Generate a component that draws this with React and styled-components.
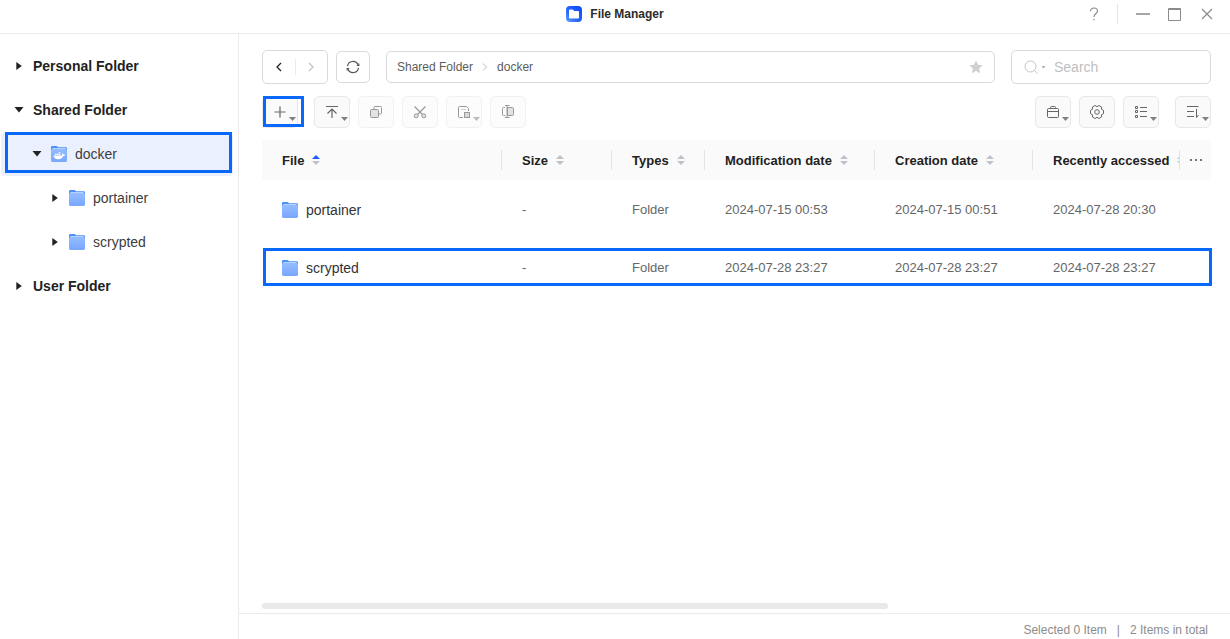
import { useState } from "react";
import styled, { createGlobalStyle, css } from "styled-components";

const GlobalStyle = createGlobalStyle`
  * {
    box-sizing: border-box;
  }

  body {
    margin: 0;
    background: #ffffff;
    color: #2b2b2b;
    font-family: "Liberation Sans", Arial, sans-serif;
    font-size: 14px;
  }

  button,
  input {
    font-family: inherit;
    font-size: inherit;
    color: inherit;
  }
`;

const Window = styled.div`
  display: flex;
  flex-direction: column;
  height: 100vh;
  overflow: hidden;
`;

const TitleBar = styled.header`
  display: grid;
  grid-template-columns: 1fr auto 1fr;
  align-items: center;
  padding: 0 16px 5px;
  height: 34px;
  flex-shrink: 0;
  border-bottom: 1px solid #ebebeb;
`;

const Title = styled.h1`
  display: flex;
  align-items: center;
  gap: 8px;
  grid-column: 2;
  margin: 0;
  font-size: 12px;
  line-height: 16px;
`;

const WindowControls = styled.div`
  display: flex;
  align-items: center;
  justify-content: flex-end;
  gap: 18px;
`;

const IconButton = styled.button`
  display: flex;
  align-items: center;
  justify-content: center;
  padding: 0;
  border: none;
  background: transparent;
  color: ${({ $color }) => $color || "#8a8a8a"};
`;

const Divider = styled.span`
  width: 1px;
  height: 20px;
  background: #e6e6e6;
`;

const Content = styled.div`
  display: flex;
  flex: 1;
  min-height: 0;
`;

const Sidebar = styled.nav`
  width: 239px;
  flex-shrink: 0;
  padding: 10px 5px 0 1px;
  border-right: 1px solid #ebebeb;
`;

const Tree = styled.ul`
  margin: 0;
  padding: 0;
  list-style-type: none;
`;

const TreeArrow = styled.span`
  display: flex;
  justify-content: center;
  width: 16px;
  margin-right: 6px;
`;

// the blue frame drawn round the parts of the page that matter
const highlight = css`
  content: "";
  position: absolute;
  border: 3px solid #0768f9;
  pointer-events: none;
`;

const TreeItem = styled.button`
  position: relative;
  display: flex;
  align-items: center;
  width: 100%;
  height: 44px;
  padding: 0 0 0 ${({ $depth }) => 10 + $depth * 18}px;
  border: none;
  border-radius: 4px;
  background: ${({ $selected }) => ($selected ? "#ebf0ff" : "transparent")};
  font-weight: ${({ $depth }) => ($depth ? "normal" : "bold")};
  color: ${({ $depth }) => ($depth ? "#3d3d3d" : "#222222")};
  text-align: left;

  svg + span {
    margin-left: 8px;
  }

  ${({ $selected }) =>
    $selected &&
    css`
      &::after {
        ${highlight}
        inset: 0 1px 3px 4px;
      }
    `}
`;

const Main = styled.main`
  display: flex;
  flex-direction: column;
  flex: 1;
  min-width: 0;
`;

const Panel = styled.div`
  display: flex;
  flex-direction: column;
  flex: 1;
  padding: 16px 19px 4px 23px;
`;

const LocationBar = styled.div`
  display: flex;
  align-items: center;
  height: 34px;
`;

const History = styled.div`
  display: flex;
  align-items: center;
  width: 66px;
  height: 34px;
  margin-right: 8px;
  border: 1px solid #d9d9d9;
  border-radius: 5px;

  button {
    flex: 1;
    height: 32px;
  }
`;

const HistoryDivider = styled.span`
  width: 1px;
  height: 16px;
  background: #ebebeb;
`;

const Refresh = styled(IconButton)`
  width: 34px;
  height: 32px;
  margin-right: 16px;
  border: 1px solid #d9d9d9;
  border-radius: 5px;
`;

const Path = styled.div`
  display: flex;
  align-items: center;
  flex: 1;
  gap: 9px;
  height: 32px;
  margin-right: 16px;
  padding: 0 11px 0 10px;
  border: 1px solid #d9d9d9;
  border-radius: 5px;
  font-size: 12px;

  button {
    margin-left: auto;
  }
`;

const PathLink = styled.a`
  color: #5c5c5c;
  text-decoration: none;
`;

const SearchBox = styled.label`
  display: flex;
  align-items: center;
  width: 200px;
  height: 34px;
  padding: 0 12px;
  border: 1px solid #d9d9d9;
  border-radius: 5px;
`;

const SearchInput = styled.input`
  flex: 1;
  min-width: 0;
  margin-left: 8px;
  padding: 0;
  border: none;
  outline: none;
  background: transparent;

  &::placeholder {
    color: #bfbfbf;
    opacity: 1;
  }
`;

const SearchCaret = styled.svg`
  margin-left: 3px;
`;

const Toolbar = styled.div`
  display: flex;
  align-items: center;
  gap: 8px;
  margin: 12px 0;
`;

const Spacer = styled.span`
  flex: ${({ $grow }) => ($grow ? 1 : "none")};
`;

const ToolButton = styled.button`
  position: relative;
  display: flex;
  align-items: center;
  justify-content: center;
  width: 36px;
  height: 32px;
  padding: 0;
  border: 1px solid #e8e8e8;
  border-radius: 5px;
  background: #fafafa;
  color: #666666;

  &:disabled {
    border-color: #f1f1f1;
    background: #fcfcfc;
    color: #999999;
  }

  ${({ $marked }) =>
    $marked &&
    css`
      &::after {
        ${highlight}
        inset: -1px -7px 0 0;
      }
    `}
`;

const Caret = styled.svg`
  position: absolute;
  right: 1px;
  bottom: 6px;
`;

const FileTable = styled.table`
  width: 100%;
  table-layout: fixed;
  border-collapse: collapse;
  color: #666666;
  font-size: 13px;
`;

const HeadCell = styled.th`
  position: relative;
  height: 40px;
  padding: 0 0 0 20px;
  overflow: hidden;
  background: #fafafa;
  color: #222222;
  text-align: left;
  white-space: nowrap;

  &:not(:last-child)::after {
    content: "";
    position: absolute;
    top: 10px;
    right: 0;
    width: 1px;
    height: 20px;
    background: #e4e4e4;
  }
`;

const MoreCell = styled(HeadCell)`
  padding: 0;

  button {
    margin: 0 auto;
  }
`;

const HeadLabel = styled.span`
  display: flex;
  align-items: center;
  gap: 8px;

  svg {
    flex-shrink: 0;
  }
`;

const FileRow = styled.tr`
  position: relative;
  height: 58px;

  ${({ $marked }) =>
    $marked &&
    css`
      &::after {
        ${highlight}
        inset: 10px -1px 10px 1px;
      }
    `}
`;

const Cell = styled.td`
  padding: 0 0 0 20px;
  white-space: nowrap;
`;

const FileName = styled.span`
  display: flex;
  align-items: center;
  gap: 8px;
  padding-top: 2px;
  color: #333333;
  font-size: 14px;
`;

const ScrollTrack = styled.div`
  height: 6px;
  margin-top: auto;
`;

const ScrollThumb = styled.div`
  width: 66%;
  height: 6px;
  border-radius: 3px;
  background: #e9e9e9;
`;

const StatusBar = styled.footer`
  display: flex;
  justify-content: flex-end;
  gap: 10px;
  height: 26px;
  padding: 8px 22px 0 0;
  border-top: 1px solid #ebebeb;
  color: #8c8c8c;
  font-size: 12px;
  line-height: 16px;
`;

const LogoIcon = () => (
  <svg width="16" height="16" viewBox="0 0 16 16">
    <defs>
      <linearGradient id="logo" x1="1" y1="0" x2="0" y2="1">
        <stop offset="0" stopColor="#0a45ff" />
        <stop offset="0.6" stopColor="#2a67fb" />
        <stop offset="1" stopColor="#5da0ff" />
      </linearGradient>
    </defs>
    <rect width="16" height="16" rx="4" fill="url(#logo)" />
    <path
      d="M3 4.600Q3 3.600 4 3.600h2.600q.5 0 .8.4l.8.9H12q1 0 1 1v5.500q0 1-1 1H4q-1 0-1-1z"
      fill="#fff"
    />
  </svg>
);

const FolderIcon = ({ docker }) => (
  <svg width="16" height="16" viewBox="0 0 16 16">
    <defs>
      <linearGradient id="folder" x1="0" y1="0" x2="0" y2="1">
        <stop offset="0" stopColor="#94bcff" />
        <stop offset="1" stopColor="#79a7ff" />
      </linearGradient>
    </defs>
    <path d="M0 1.2Q0 0 1.2 0h4.400l1.600 1.2h7.600q1.2 0 1.2 1.2V9H0z" fill="#4b91f7" />
    <path d="M1 3.200q0-1 1-1h12q1 0 1 1V6H1z" fill="#d8e8ff" />
    <path
      d="M0 4.400Q0 3 1.400 3h13.200Q16 3 16 4.400v10.200q0 1.400-1.400 1.400H1.400Q0 16 0 14.600z"
      fill="url(#folder)"
    />
    {docker && (
      <g fill="#fff">
        <path d="M2.600 9.600h8.200c.5-.5.5-1.200.1-1.700l.7-.7c.5.4.8.8.9 1.400.7-.1 1.200 0 1.700.4-.4.8-1 1-1.900 1-.8 2-2.500 3.300-5.200 3.300-2.900 0-4.400-1.400-4.500-3.700z" />
        <path d="M4 7.700h1.500v1.400H4zM5.900 7.700h1.500v1.400H5.900zM7.800 7.700h1.500v1.400H7.800zM7.800 5.900h1.500v1.400H7.800z" />
      </g>
    )}
  </svg>
);

const Arrow = ({ open }) =>
  open ? (
    <svg width="10" height="6" viewBox="0 0 10 6">
      <path d="M.5 0h9L5 5.500z" fill="#222" />
    </svg>
  ) : (
    <svg width="6" height="8" viewBox="0 0 6 8">
      <path d="M.3 0v8L5.800 4z" fill="#222" />
    </svg>
  );

const SortIcon = ({ ascending }) => (
  <svg width="8" height="10" viewBox="0 0 8 10">
    <path d="M0 4h8L4 0z" fill={ascending ? "#1a5cff" : "#bfc2cb"} />
    <path d="M0 6h8L4 10z" fill="#bfc2cb" />
  </svg>
);

const Chevron = ({ left }) => (
  <svg width="6" height="12" viewBox="0 0 6 12" fill="none">
    <path
      d={left ? "M5 2 1 6l4 4" : "M1 2l4 4-4 4"}
      stroke="currentColor"
      strokeWidth="1.300"
    />
  </svg>
);

const PathSeparator = () => (
  <svg width="6" height="10" viewBox="0 0 6 10" fill="none" stroke="#bbb">
    <path d="M1 1.500 4.500 5 1 8.500" />
  </svg>
);

const glyphs = {
  plus: <path d="M8 2.500v11M2.500 8h11" strokeWidth="1.200" />,
  upload: (
    <path d="M2 2.500h12M8 14V5M3.500 9.500 8 5l4.500 4.500" strokeWidth="1.200" />
  ),
  copy: (
    <>
      <path d="M6 5V3.500q0-1 1-1h5.500q1 0 1 1V9q0 1-1 1H11" />
      <rect x="2.500" y="5.500" width="8" height="8" rx="1" fill="#e2e2e2" />
    </>
  ),
  cut: (
    <>
      <path d="M2.500 2.500l8 8M13.500 2.500l-8 8" strokeWidth="1.200" />
      <circle cx="4.200" cy="11.800" r="2" fill="#e2e2e2" />
      <circle cx="11.800" cy="11.800" r="2" fill="#e2e2e2" />
    </>
  ),
  paste: (
    <>
      <path d="M7 13.500H3.500q-1 0-1-1v-9q0-1 1-1h7l2 2V7" />
      <path d="M5 5.500h5" stroke="#d0d0d0" />
      <rect x="8.500" y="8.500" width="5" height="5" fill="#d8d8d8" />
    </>
  ),
  rename: (
    <>
      <path d="M5 3.500H3.500q-1 0-1 1v6q0 1 1 1H5" />
      <path d="M7.500 3.500h5q1 0 1 1v6q0 1-1 1h-5z" fill="#e2e2e2" />
      <path d="M5 1.500h4.500M7 1.500v12M5 13.500h4.500" />
    </>
  ),
  toolbox: (
    <>
      <rect x="2.500" y="4.500" width="11" height="9" rx="1" />
      <path d="M5.500 4.500v-1q0-1 1-1h3q1 0 1 1v1M2.500 7.500h11" />
    </>
  ),
  settings: (
    <>
      <path
        d="M14.500 6.400v3.200l-2 1.100.1 2.300-2.700 1.500L8 13.300l-1.900 1.200L3.400 13l.1-2.300-2-1.100V6.400l2-1.100L3.400 3l2.700-1.500L8 2.700l1.900-1.200L12.600 3l-.1 2.300z"
        strokeLinejoin="round"
      />
      <circle cx="8" cy="8" r="2.300" />
    </>
  ),
  list: (
    <path d="M2.500 2.500h2v2h-2zM2.500 6.500h2v2h-2zM2.500 11.500h2v2h-2zM7 3.500h7M7 7.500h7M7 12.500h7" />
  ),
  sort: <path d="M2 2.500h11.500M2 7.500h7M2 12.500h7M11.500 5v8.500l2-2.500" />,
};

const Glyph = ({ name }) => (
  <svg width="16" height="16" viewBox="0 0 16 16" fill="none" stroke="currentColor">
    {glyphs[name]}
  </svg>
);

const Tool = ({ icon, label, menu, disabled, marked }) => (
  <ToolButton aria-label={label} disabled={disabled} $marked={marked}>
    <Glyph name={icon} />
    {menu && (
      <Caret width="7" height="4" viewBox="0 0 7 4">
        <path d="M0 0h7L3.500 4z" fill={disabled ? "#bbb" : "#808080"} />
      </Caret>
    )}
  </ToolButton>
);

const tree = [
  { name: "Personal Folder", depth: 0 },
  { name: "Shared Folder", depth: 0, open: true },
  { name: "docker", depth: 1, open: true },
  { name: "portainer", depth: 2 },
  { name: "scrypted", depth: 2 },
  { name: "User Folder", depth: 0 },
];

const columns = [
  { name: "File" },
  { name: "Size", width: 110 },
  { name: "Types", width: 93 },
  { name: "Modification date", width: 170 },
  { name: "Creation date", width: 158 },
  { name: "Recently accessed", width: 147 },
];

const files = [
  {
    name: "portainer",
    modified: "2024-07-15 00:53",
    created: "2024-07-15 00:51",
    accessed: "2024-07-28 20:30",
  },
  {
    name: "scrypted",
    modified: "2024-07-28 23:27",
    created: "2024-07-28 23:27",
    accessed: "2024-07-28 23:27",
    marked: true,
  },
];

const App = () => {
  const [selected, setSelected] = useState("docker");
  const [search, setSearch] = useState("");

  return (
    <Window>
      <GlobalStyle />
      <TitleBar>
        <Title>
          <LogoIcon />
          File Manager
        </Title>
        <WindowControls>
          <IconButton aria-label="Help">
            <svg width="10" height="14" viewBox="0 0 10 14" fill="none" stroke="currentColor" strokeWidth="1.200">
              <path d="M1.500 4.200C1.500 2.200 3 1 5 1s3.500 1.200 3.500 3c0 2.500-3.500 2.600-3.500 6M5 11.800v1.500" />
            </svg>
          </IconButton>
          <Divider />
          <IconButton aria-label="Minimize">
            <svg width="14" height="14" viewBox="0 0 14 14">
              <path d="M0 7h14" stroke="currentColor" strokeWidth="1.500" />
            </svg>
          </IconButton>
          <IconButton aria-label="Maximize">
            <svg width="14" height="14" viewBox="0 0 14 14" fill="none" stroke="currentColor">
              <path d="M.5 1.500h12v12H.5zM.5 2.500h12" />
            </svg>
          </IconButton>
          <IconButton aria-label="Close">
            <svg width="14" height="14" viewBox="0 0 14 14" stroke="currentColor" strokeWidth="1.200">
              <path d="M2 2l10 10M12 2 2 12" />
            </svg>
          </IconButton>
        </WindowControls>
      </TitleBar>
      <Content>
        <Sidebar>
          <Tree>
            {tree.map(({ name, depth, open }) => (
              <li key={name}>
                <TreeItem
                  $depth={depth}
                  $selected={name === selected}
                  onClick={() => setSelected(name)}
                >
                  <TreeArrow>
                    <Arrow open={open} />
                  </TreeArrow>
                  {depth > 0 && <FolderIcon docker={name === "docker"} />}
                  <span>{name}</span>
                </TreeItem>
              </li>
            ))}
          </Tree>
        </Sidebar>
        <Main>
          <Panel>
            <LocationBar>
              <History>
                <IconButton aria-label="Back" $color="#222222">
                  <Chevron left />
                </IconButton>
                <HistoryDivider />
                <IconButton aria-label="Forward" $color="#c4c4c4">
                  <Chevron />
                </IconButton>
              </History>
              <Refresh aria-label="Refresh" $color="#555555">
                <svg width="14" height="14" viewBox="0 0 14 14" fill="none" stroke="currentColor" strokeWidth="1.200">
                  <path d="M1.500 6.200A5.500 5.500 0 0 1 12 4.800M12.500 7.800A5.500 5.500 0 0 1 2 9.200" />
                  <path d="M12.800 3.500v2h-2M1.200 10.500v-2h2" />
                </svg>
              </Refresh>
              <Path>
                <PathLink href="#shared">Shared Folder</PathLink>
                <PathSeparator />
                <PathLink href="#docker">docker</PathLink>
                <IconButton aria-label="Add to favourites" $color="#d0d0d0">
                  <svg width="14" height="14" viewBox="0 0 14 14" fill="currentColor">
                    <path d="M7 .5l2 4.300 4.600.5-3.400 3.200.9 4.700L7 10.900l-4.100 2.300.9-4.700L.4 5.300 5 4.800z" />
                  </svg>
                </IconButton>
              </Path>
              <SearchBox>
                <svg width="14" height="14" viewBox="0 0 14 14" fill="none" stroke="#c4c4c4">
                  <circle cx="6.500" cy="6.500" r="5.500" />
                  <path d="M10.500 10.500l3 3" />
                </svg>
                <SearchCaret width="5" height="3" viewBox="0 0 5 3">
                  <path d="M.5 0h4l-2 2.500z" fill="#b0b0b0" />
                </SearchCaret>
                <SearchInput
                  aria-label="Search"
                  placeholder="Search"
                  value={search}
                  onChange={(e) => setSearch(e.target.value)}
                />
              </SearchBox>
            </LocationBar>
            <Toolbar>
              <Tool icon="plus" label="New" menu marked />
              <Spacer />
              <Tool icon="upload" label="Upload" menu />
              <Tool icon="copy" label="Copy" disabled />
              <Tool icon="cut" label="Cut" disabled />
              <Tool icon="paste" label="Paste" menu disabled />
              <Tool icon="rename" label="Rename" disabled />
              <Spacer $grow />
              <Tool icon="toolbox" label="Tools" menu />
              <Tool icon="settings" label="Settings" />
              <Tool icon="list" label="View" menu />
              <Spacer />
              <Tool icon="sort" label="Sort" menu />
            </Toolbar>
            <FileTable>
              <colgroup>
                {columns.map(({ name, width }) => (
                  <col key={name} width={width} />
                ))}
                <col width="31" />
              </colgroup>
              <thead>
                <tr>
                  {columns.map(({ name }) => (
                    <HeadCell key={name}>
                      <HeadLabel>
                        {name}
                        <SortIcon ascending={name === "File"} />
                      </HeadLabel>
                    </HeadCell>
                  ))}
                  <MoreCell>
                    <IconButton aria-label="Choose columns" $color="#555555">
                      <svg width="14" height="4" viewBox="0 0 14 4" fill="currentColor">
                        <circle cx="2" cy="2" r="1.100" />
                        <circle cx="7" cy="2" r="1.100" />
                        <circle cx="12" cy="2" r="1.100" />
                      </svg>
                    </IconButton>
                  </MoreCell>
                </tr>
              </thead>
              <tbody>
                {files.map((file) => (
                  <FileRow key={file.name} $marked={file.marked}>
                    <Cell>
                      <FileName>
                        <FolderIcon />
                        {file.name}
                      </FileName>
                    </Cell>
                    <Cell>-</Cell>
                    <Cell>Folder</Cell>
                    <Cell>{file.modified}</Cell>
                    <Cell>{file.created}</Cell>
                    <Cell>{file.accessed}</Cell>
                  </FileRow>
                ))}
              </tbody>
            </FileTable>
            <ScrollTrack>
              <ScrollThumb />
            </ScrollTrack>
          </Panel>
          <StatusBar>
            <span>Selected 0 Item</span>
            <span>|</span>
            <span>2 Items in total</span>
          </StatusBar>
        </Main>
      </Content>
    </Window>
  );
};

export default App;
